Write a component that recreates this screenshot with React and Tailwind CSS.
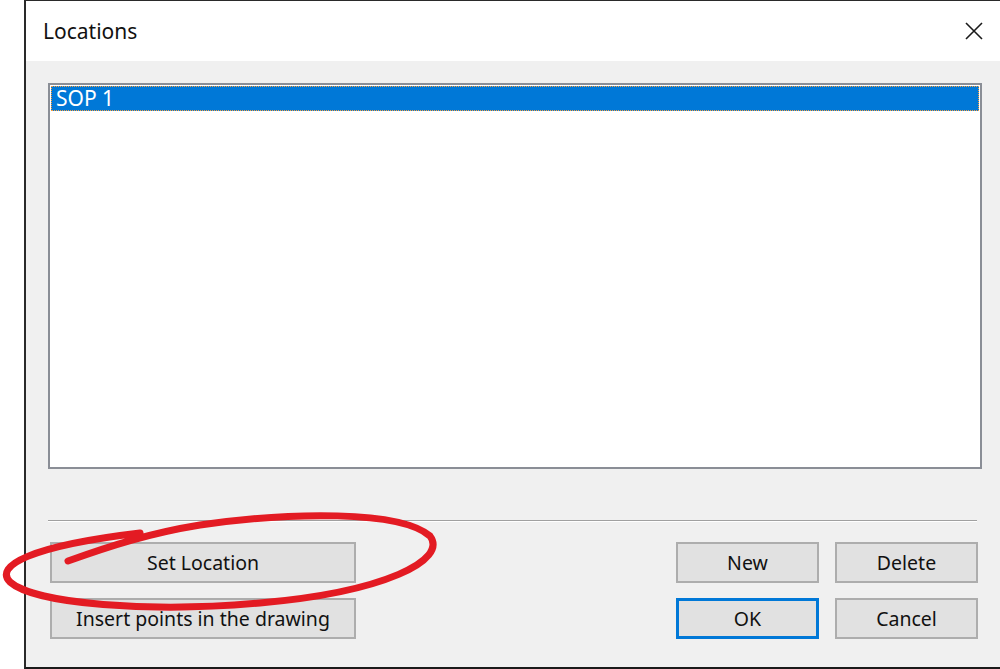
import React from "react";

const font = { fontFamily: '"Noto Sans", "Open Sans", sans-serif' };

const Button = ({ label, width, primary }) => (
  <button
    className={`h-[41px] ${width} flex items-center justify-center bg-[#e1e1e1] text-[19.5px] text-[#111] leading-none pt-[1px] ${
      primary ? "border-[3px] border-[#0078d7]" : "border-2 border-[#adadad]"
    }`}
  >
    {label}
  </button>
);

const App = () => {
  return (
    <div
      className="relative w-[1000px] h-[669px] bg-white flex overflow-hidden"
      style={font}
    >
      <div className="w-[24px] shrink-0 bg-white" />
      <div className="flex-1 flex flex-col border-l-2 border-t border-b-2 border-l-[#2a2a2a] border-t-[#2a2a2a] border-b-[#1a1a1a]">
        {/* title bar */}
        <div className="h-[60px] shrink-0 bg-white flex items-center justify-between pl-[17px] pr-[20px]">
          <span className="text-[21px] text-[#111] pt-[2px]">Locations</span>
          <svg width="20" height="20" viewBox="0 0 20 20" className="mb-[1px]">
            <path
              d="M2 2 L18 18 M18 2 L2 18"
              stroke="#1a1a1a"
              strokeWidth="1.6"
              fill="none"
            />
          </svg>
        </div>

        {/* body */}
        <div className="flex-1 bg-[#f0f0f0] flex flex-col px-[22px] pt-[22px]">
          <div className="w-[934px] h-[386px] shrink-0 bg-white border-2 border-[#8a8e96] p-px">
            <div className="h-[25px] bg-[#0078d7] border border-dotted border-[#f8a040] flex items-center pl-[4px] text-[21px] text-white leading-none">
              SOP 1
            </div>
          </div>

          <div className="mt-[51px] w-[929px] border-t border-t-[#a0a0a0] border-b border-b-white" />

          <div className="mt-[20px] flex justify-between w-[930px] pl-[2px]">
            <Button label="Set Location" width="w-[306px]" />
            <div className="flex gap-[16px]">
              <Button label="New" width="w-[143px]" />
              <Button label="Delete" width="w-[143px]" />
            </div>
          </div>
          <div className="mt-[15px] flex justify-between w-[930px] pl-[2px]">
            <Button label="Insert points in the drawing" width="w-[306px]" />
            <div className="flex gap-[16px]">
              <Button label="OK" width="w-[143px]" primary />
              <Button label="Cancel" width="w-[143px]" />
            </div>
          </div>
        </div>
      </div>

      {/* red hand-drawn annotation */}
      <svg
        className="absolute left-0 top-0 pointer-events-none"
        width="1000"
        height="669"
        viewBox="0 0 1000 669"
      >
        <path
          d="M68 561 C110 546 150 533 200 525 C290 512 400 510 430 536 C448 560 385 592 260 603 C150 613 35 604 10 582 C-6 566 30 546 140 533"
          stroke="#e31b23"
          strokeWidth="7"
          strokeLinecap="round"
          fill="none"
        />
      </svg>
    </div>
  );
};

export default App;
